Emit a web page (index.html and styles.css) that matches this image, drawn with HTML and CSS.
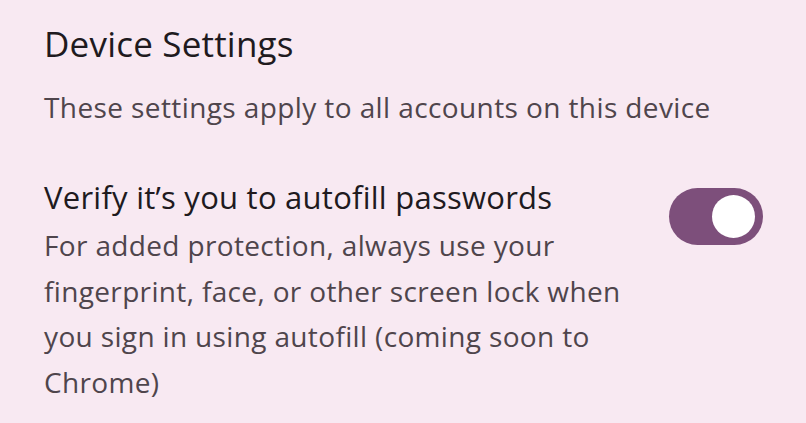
FILE: index.html
```html
<!DOCTYPE html>
<html lang="en">
<head>
    <meta charset="UTF-8">
    <meta name="viewport" content="width=device-width, initial-scale=1.0">
    <title>Device Settings</title>
    <link rel="stylesheet" href="styles.css">
</head>
<body>

    <!-- Device settings section -->
    <div class="section">
        <h1 class="section-title">Device Settings</h1>
        <p class="section-summary">These settings apply to all accounts on this device</p>

        <div class="pref-row">
            <div class="pref-text">
                <div class="pref-title">Verify it’s you to autofill passwords</div>
                <div class="pref-summary">For added protection, always use your fingerprint, face, or other screen lock when you sign in using autofill (coming soon to Chrome)</div>
            </div>
            <div class="switch on">
                <div class="switch-thumb"></div>
            </div>
        </div>
    </div>

</body>
</html>
```

FILE: styles.css
```css
body {
    margin: 0;
    background-color: #f8e9f2;
    font-family: "Open Sans", Roboto, sans-serif;
    overflow: hidden;
}
.section {
    padding: 20px 43px 0 44px;
}
.section-title {
    margin: 0;
    font-size: 35px;
    font-weight: 400;
    line-height: 48px;
    letter-spacing: 0.2px;
    color: #201a1e;
}
.section-summary {
    margin: 19px 0 0 0;
    font-size: 28px;
    line-height: 40px;
    letter-spacing: 0.4px;
    color: #4f454c;
}
.pref-row {
    display: flex;
    align-items: flex-start;
    margin-top: 49px;
}
.pref-text {
    flex: 1;
}
.pref-title {
    font-size: 31px;
    line-height: 42px;
    letter-spacing: 0.25px;
    color: #201a1e;
}
.pref-summary {
    width: 600px;
    margin-top: 5px;
    font-size: 28px;
    line-height: 45.5px;
    letter-spacing: 0.35px;
    color: #4f454c;
}
.switch {
    width: 94px;
    height: 57px;
    margin-top: 12px;
    border-radius: 29px;
    background-color: #7d4f7b;
    display: flex;
    align-items: center;
    justify-content: flex-end;
    padding-right: 8px;
    box-sizing: border-box;
}
.switch-thumb {
    width: 43px;
    height: 43px;
    border-radius: 50%;
    background-color: #ffffff;
}
```
